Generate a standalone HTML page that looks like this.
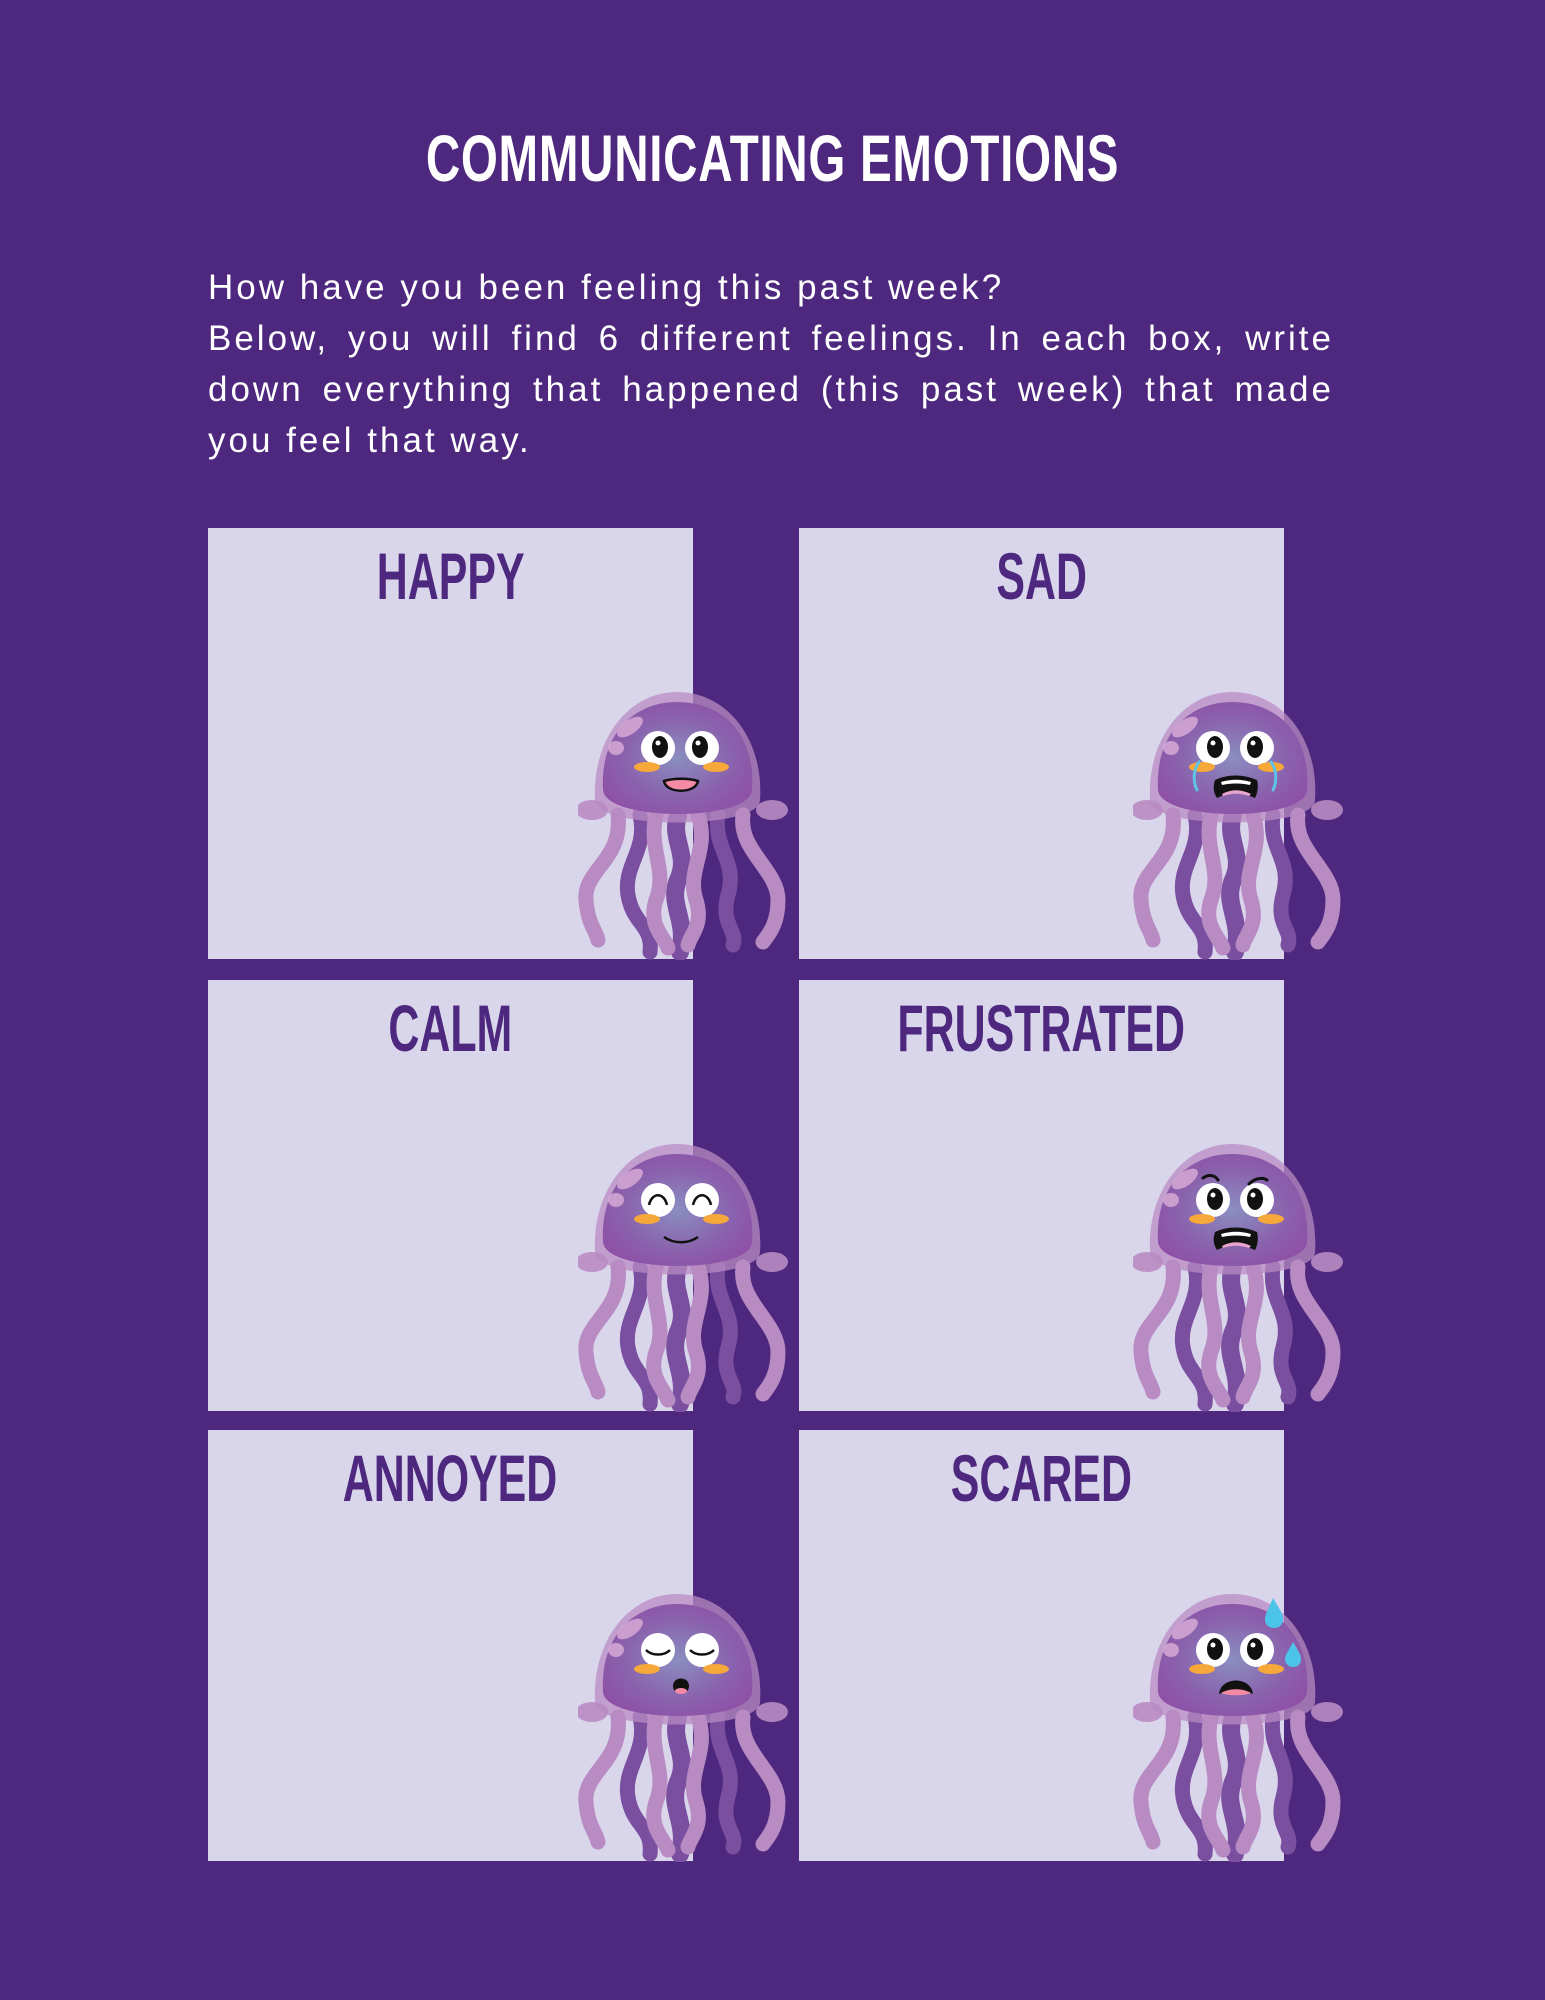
<!DOCTYPE html>
<html><head><meta charset="utf-8">
<style>
html,body{margin:0;padding:0}
body{width:1545px;height:2000px;background:#4e287e;position:relative;overflow:hidden;font-family:"Liberation Sans",sans-serif}
.title{position:absolute;left:0;width:1545px;top:118px;text-align:center;color:#fff;font-weight:bold;font-size:66px;line-height:80px;}
.title span{display:inline-block;transform:scaleX(0.72);letter-spacing:1px}
.para{position:absolute;left:208px;width:1126px;top:262px;color:#fff;font-size:35px;line-height:51px;letter-spacing:3px}
.para div{white-space:nowrap}
.para .j{text-align:justify;text-align-last:justify;white-space:normal}
.box{position:absolute;width:485px;height:431px;background:#d9d6ec}
.lab{position:absolute;text-align:center;color:#4e287e;font-weight:bold;font-size:66px;line-height:80px}
.lab span{display:inline-block;transform:scaleX(0.65)}
.jf{position:absolute;width:210px;height:270px}
</style></head><body>
<svg width="0" height="0" style="position:absolute">
<defs>
<radialGradient id="bg" cx="0.5" cy="0.5" r="0.6">
<stop offset="0" stop-color="#8a8ec0"/><stop offset="0.6" stop-color="#8a62ad"/><stop offset="1" stop-color="#8e4fa6"/>
</radialGradient>
<symbol id="jb" viewBox="0 0 210 270">
<g fill="none" stroke-linecap="round" stroke-width="15">
<path d="M62,125 C70,160 45,175 50,205 C55,235 75,235 72,262" stroke="#7a4fa0"/>
<path d="M100,125 C92,150 112,165 100,190 C90,215 110,230 102,262" stroke="#7a4fa0" stroke-width="18"/>
<path d="M140,125 C135,160 160,170 150,205 C142,235 160,240 155,255" stroke="#7a4fa0"/>
<path d="M40,125 C45,170 5,180 8,210 C10,235 18,240 20,250" stroke="#b88bc3"/>
<path d="M78,125 C70,160 90,180 78,210 C70,235 85,245 90,258" stroke="#b88bc3"/>
<path d="M120,125 C132,160 108,180 118,210 C126,235 112,245 110,255" stroke="#b88bc3"/>
<path d="M165,125 C160,160 200,180 200,210 C200,235 190,245 185,252" stroke="#b88bc3"/>
</g>
<ellipse cx="14" cy="120" rx="16" ry="10" fill="#b88bc3" opacity="0.9"/>
<ellipse cx="194" cy="120" rx="16" ry="10" fill="#b88bc3" opacity="0.9"/>
<path d="M17,110 C14,50 50,2 99,2 C150,2 186,50 182,110 C182,140 17,140 17,110 Z" fill="#b88bc3" opacity="0.75"/>
<path d="M25,100 C22,45 55,12 99,12 C145,12 178,45 174,100 C172,132 28,132 25,100 Z" fill="url(#bg)"/>
<ellipse cx="52" cy="37" rx="15" ry="7" transform="rotate(-35 52 37)" fill="#d6a9d6" opacity="0.85"/>
<ellipse cx="38" cy="58" rx="8" ry="7" fill="#d6a9d6" opacity="0.85"/>
</symbol>
<g id="eyes">
<circle cx="80" cy="58" r="17" fill="#fff"/><circle cx="124" cy="58" r="17" fill="#fff"/>
<ellipse cx="82" cy="57" rx="8" ry="11" fill="#111"/><ellipse cx="122" cy="57" rx="8" ry="11" fill="#111"/>
<circle cx="80" cy="53" r="2.5" fill="#fff"/><circle cx="120" cy="53" r="2.5" fill="#fff"/>
</g>
<g id="cheeks"><ellipse cx="69" cy="77" rx="13" ry="5" fill="#f6a83b"/><ellipse cx="138" cy="77" rx="13" ry="5" fill="#f6a83b"/></g>
<g id="grim"><path d="M82,90 C95,84 110,84 124,90 C126,98 124,104 122,108 C108,102 96,102 84,108 C80,102 80,96 82,90 Z" fill="#111"/>
<path d="M88,92 C98,89 108,89 118,92 L117,95 C108,93 98,93 89,95Z" fill="#fff"/>
<path d="M89,104 C98,99 108,99 118,104 L116,106 C107,103 99,103 90,106Z" fill="#e9a6cf"/></g>
</defs></svg>

<div class="title"><span>COMMUNICATING EMOTIONS</span></div>
<div class="para">
<div>How have you been feeling this past week?</div>
<div class="j">Below, you will find 6 different feelings. In each box, write</div>
<div class="j">down everything that happened (this past week) that made</div>
<div>you feel that way.</div>
</div>

<div class="box" style="left:208px;top:528px"></div>
<div class="box" style="left:799px;top:528px"></div>
<div class="box" style="left:208px;top:980px"></div>
<div class="box" style="left:799px;top:980px"></div>
<div class="box" style="left:208px;top:1430px"></div>
<div class="box" style="left:799px;top:1430px"></div>

<div class="lab" style="left:208px;width:485px;top:536px"><span>HAPPY</span></div>
<div class="lab" style="left:799px;width:485px;top:536px"><span>SAD</span></div>
<div class="lab" style="left:208px;width:485px;top:988px"><span>CALM</span></div>
<div class="lab" style="left:799px;width:485px;top:988px"><span>FRUSTRATED</span></div>
<div class="lab" style="left:208px;width:485px;top:1438px"><span>ANNOYED</span></div>
<div class="lab" style="left:799px;width:485px;top:1438px"><span>SCARED</span></div>

<!-- HAPPY -->
<svg class="jf" style="left:578px;top:690px" viewBox="0 0 210 270"><use href="#jb"/><use href="#eyes"/><use href="#cheeks"/>
<path d="M86,91 C96,88 110,88 120,91 C118,104 88,104 86,91 Z" fill="#f48aa4" stroke="#111" stroke-width="2.5"/></svg>
<!-- SAD -->
<svg class="jf" style="left:1133px;top:690px" viewBox="0 0 210 270"><use href="#jb"/><use href="#eyes"/><use href="#cheeks"/><use href="#grim"/>
<path d="M66,72 C60,80 60,92 64,100" stroke="#5bc4e6" stroke-width="3" fill="none" stroke-linecap="round"/>
<path d="M138,72 C144,80 144,92 140,100" stroke="#5bc4e6" stroke-width="3" fill="none" stroke-linecap="round"/></svg>
<!-- CALM -->
<svg class="jf" style="left:578px;top:1142px" viewBox="0 0 210 270"><use href="#jb"/>
<circle cx="80" cy="58" r="17" fill="#fff"/><circle cx="124" cy="58" r="17" fill="#fff"/>
<path d="M71,63 C74,50 86,50 89,63 M115,63 C118,50 130,50 133,63" stroke="#111" stroke-width="2.5" fill="none"/>
<use href="#cheeks"/><path d="M86,95 C96,102 110,102 120,95" stroke="#111" stroke-width="2.5" fill="none"/></svg>
<!-- FRUSTRATED -->
<svg class="jf" style="left:1133px;top:1142px" viewBox="0 0 210 270"><use href="#jb"/><use href="#eyes"/><use href="#cheeks"/><use href="#grim"/>
<path d="M70,36 C76,32 82,33 85,38 M116,42 C122,36 130,35 134,38" stroke="#111" stroke-width="3" fill="none" stroke-linecap="round"/></svg>
<!-- ANNOYED -->
<svg class="jf" style="left:578px;top:1592px" viewBox="0 0 210 270"><use href="#jb"/>
<circle cx="80" cy="58" r="17" fill="#fff"/><circle cx="124" cy="58" r="17" fill="#fff"/>
<path d="M68,58 C74,64 86,64 92,58 M112,58 C118,64 130,64 136,58" stroke="#111" stroke-width="2.5" fill="none"/>
<use href="#cheeks"/><path d="M95,94 C95,84 111,84 111,94 C111,104 95,104 95,94Z" fill="#111"/><ellipse cx="103" cy="99" rx="6" ry="3" fill="#f48aa4"/></svg>
<!-- SCARED -->
<svg class="jf" style="left:1133px;top:1592px" viewBox="0 0 210 270"><use href="#jb"/><use href="#eyes"/><use href="#cheeks"/>
<path d="M86,102 C88,84 118,84 120,102 C110,98 96,98 86,102Z" fill="#111"/><path d="M88,101 C96,96 110,96 118,101 C110,104 96,104 88,101Z" fill="#f48aa4"/>
<path d="M140,6 C146,16 150,22 150,27 C150,33 146,36 141,36 C136,36 132,33 132,27 C132,22 136,16 140,6Z" fill="#4cc3e8"/>
<path d="M160,50 C165,58 168,63 168,67 C168,72 165,75 160,75 C156,75 152,72 152,67 C152,63 156,58 160,50Z" fill="#4cc3e8"/></svg>
</body></html>
